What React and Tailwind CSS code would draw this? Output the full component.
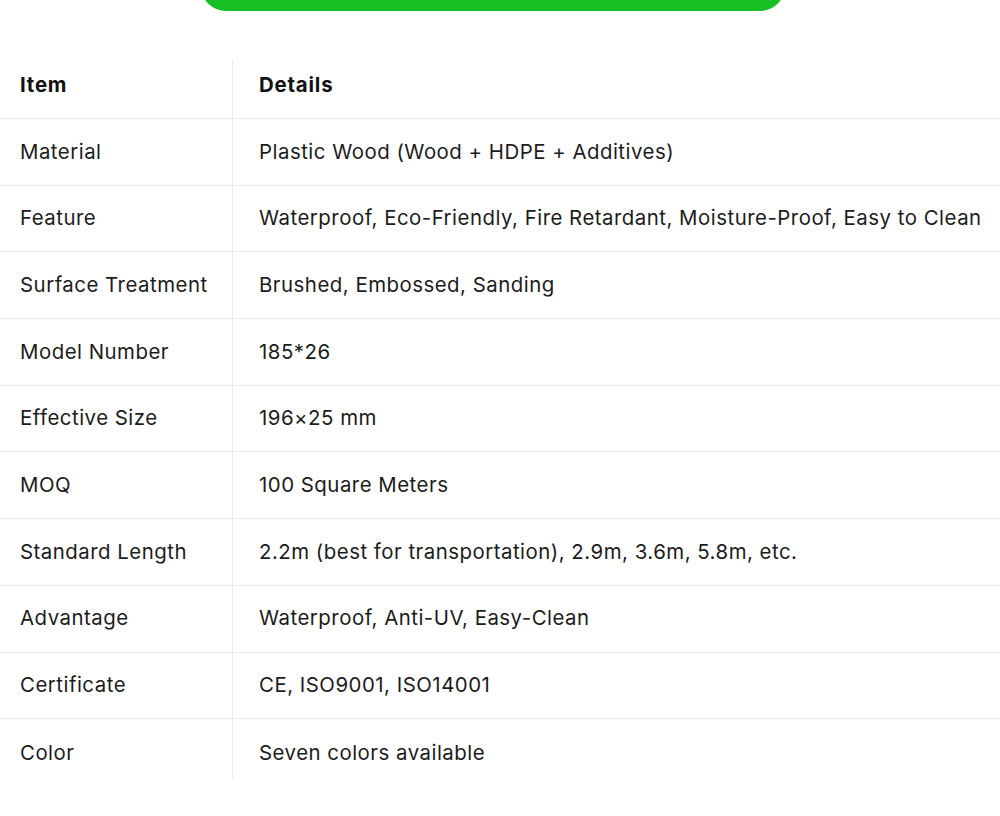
import React from 'react';

const rows = [
  ['Material', 'Plastic Wood (Wood + HDPE + Additives)'],
  ['Feature', 'Waterproof, Eco-Friendly, Fire Retardant, Moisture-Proof, Easy to Clean'],
  ['Surface Treatment', 'Brushed, Embossed, Sanding'],
  ['Model Number', '185*26'],
  ['Effective Size', '196×25 mm'],
  ['MOQ', '100 Square Meters'],
  ['Standard Length', '2.2m (best for transportation), 2.9m, 3.6m, 5.8m, etc.'],
  ['Advantage', 'Waterproof, Anti-UV, Easy-Clean'],
  ['Certificate', 'CE, ISO9001, ISO14001'],
  ['Color', 'Seven colors available'],
];

export default function App() {
  return (
    <div className="min-h-screen w-[1000px] overflow-hidden bg-white font-['Inter',sans-serif] text-[20.4px] tracking-[0.5px] text-[#1c1c1c]">
      {/* Contact button (cut off at top) */}
      <div className="ml-[201px] -mt-[39px] h-[50px] w-[584px] rounded-[25px] bg-[#18bf24]" />

      {/* Spec table */}
      <div className="mt-[48px]">
        <div className="grid grid-cols-[233px_1fr] h-[59px] font-bold tracking-[0.8px] text-[#111]">
          <div className="flex items-center pl-5 pb-1.5 border-r-[1.5px] border-[#ebebeb]">Item</div>
          <div className="flex items-center pl-[26px] pb-1.5">Details</div>
        </div>
        {rows.map(([item, details], i) => (
          <div
            key={item}
            className={`grid grid-cols-[233px_1fr] border-t-[1.5px] border-[#e9e9e9] ${i === rows.length - 1 ? 'h-[61px]' : 'h-[66.7px]'}`}
          >
            <div className={`flex pl-5 border-r-[1.5px] border-[#ebebeb] ${i === rows.length - 1 ? 'items-start pt-[19px]' : 'items-center'}`}>{item}</div>
            <div className={`flex pl-[26px] whitespace-nowrap ${i === rows.length - 1 ? 'items-start pt-[19px]' : 'items-center'}`}>{details}</div>
          </div>
        ))}
      </div>
    </div>
  );
}
